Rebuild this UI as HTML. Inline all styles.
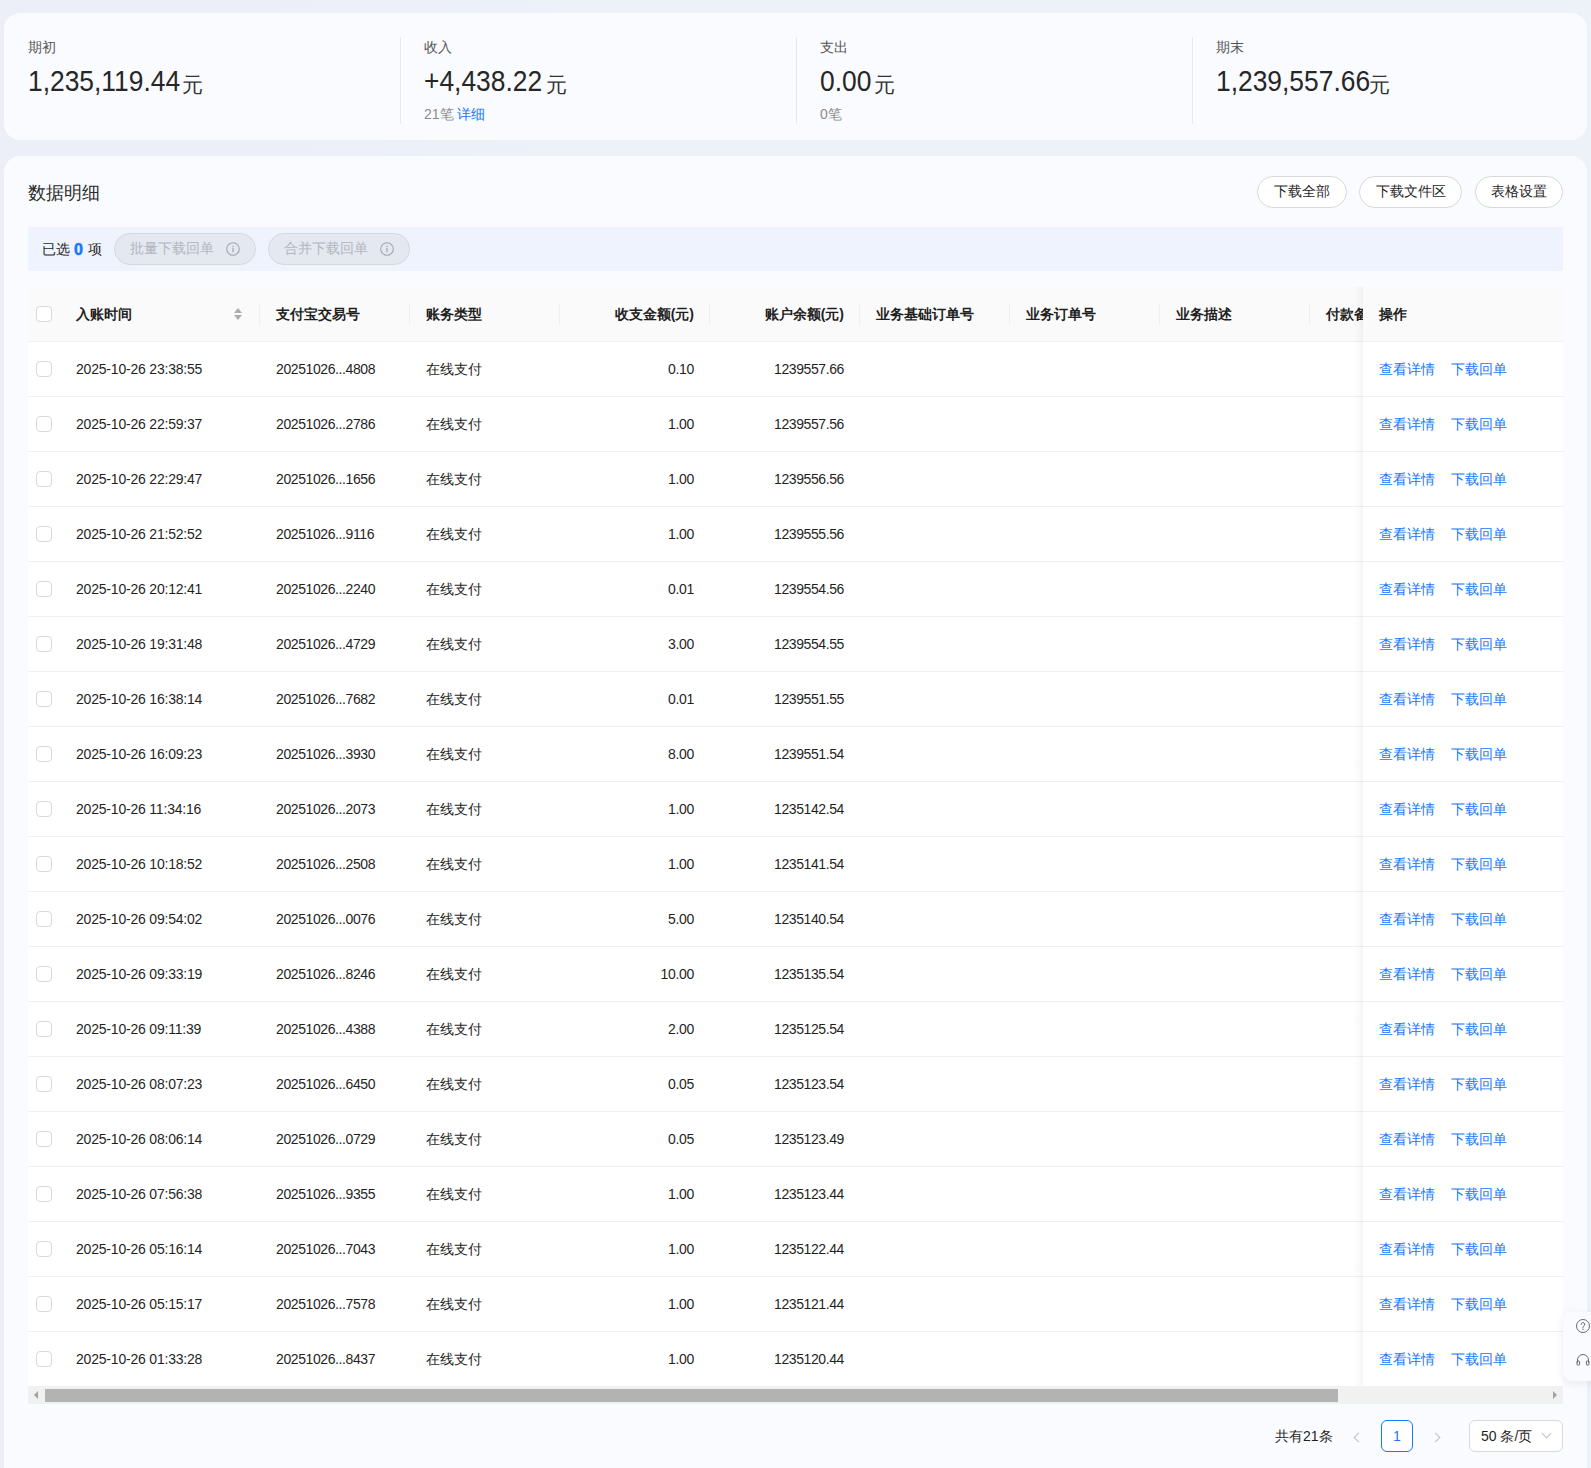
<!DOCTYPE html>
<html><head><meta charset="utf-8"><title>数据明细</title>
<style>
*{margin:0;padding:0;box-sizing:border-box}
html,body{width:1591px;height:1468px;overflow:hidden}
body{font-family:"Liberation Sans",sans-serif;font-size:14px;color:#1f1f1f;background:#edf1f8;position:relative}
.bg{position:absolute;left:0;top:0;width:1591px;height:1468px;background:linear-gradient(90deg,#eceef8 0%,#edf1f8 40%,#edf2f8 100%)}
.card1{position:absolute;left:4px;top:13px;width:1583px;height:127px;background:#fafbfe;border-radius:16px}
.sec{position:absolute;top:0;height:127px;width:396px}
.s0{left:0}.s1{left:396px}.s2{left:792px}.s3{left:1188px}
.dv{position:absolute;left:0;top:24px;width:1px;height:87px;background:#e6e8ee}
.lab{position:absolute;left:24px;top:25px;font-size:14px;line-height:18px;color:#555}
.num{position:absolute;left:24px;top:46px;height:44px;white-space:nowrap;color:#262626}
.nv{display:inline-block;font-size:29px;line-height:44px;transform:scaleX(.91);transform-origin:0 50%;vertical-align:top}
.yuan{position:absolute;top:58px;font-size:21px;line-height:28px;color:#333}
.s0 .yuan{left:178px}.s1 .yuan{left:146px}.s2 .yuan{left:78px}.s3 .yuan{left:177px}
.sub{position:absolute;left:24px;top:93px;font-size:14px;line-height:16px;white-space:nowrap}
.sub .g{color:#8c8c8c}
.lk{color:#1677ff}
.card2{position:absolute;left:4px;top:156px;width:1583px;height:1340px;background:#fafbfe;border-radius:16px}
.title{position:absolute;left:24px;top:24px;font-size:18px;line-height:26px;color:#2b2b2b}
.btn{position:absolute;top:20px;height:32px;line-height:29px;border:1px solid #d9d9d9;border-radius:16px;background:#fff;font-size:14px;color:#1f1f1f;text-align:center}
.b1{left:1253px;width:90px}.b2{left:1355px;width:103px}.b3{left:1471px;width:88px}
.selbar{position:absolute;left:24px;top:71px;width:1535px;height:44px;background:#eef3fd}
.seltxt{position:absolute;left:14px;top:0;line-height:44px;font-size:14px;color:#1f1f1f;white-space:nowrap}
.seltxt b{color:#1677ff;font-size:16px;position:relative;top:1px;-webkit-text-stroke:.5px #1677ff;margin-right:1px}
.pill{position:absolute;top:6px;height:32px;width:142px;border:1px solid #d6d8dc;border-radius:16px;background:#e4e9f1;color:#b3b6bd;font-size:14px;line-height:29px;padding-left:15px;white-space:nowrap}
.p1{left:86px}.p2{left:240px}
.info{position:absolute;left:111px;top:8px;width:14px;height:14px}
.tbl{position:absolute;left:24px;top:131px;width:1535px;height:1099px;background:#fff;border-radius:8px 8px 0 0;overflow:hidden}
.thead{position:absolute;left:0;top:0;width:1535px;height:55px;background:#fafafa;border-bottom:1px solid #f0f0f0}
.cb{position:absolute;left:8px;top:19px;width:16px;height:16px;border:1px solid #d9d9d9;border-radius:4px;background:#fff}
.th{position:absolute;top:0;line-height:54px;font-size:14px;font-weight:bold;color:#1f1f1f;white-space:nowrap}
.th.r{left:auto}
.vdiv{position:absolute;top:16px;width:1px;height:22px;background:#f0f0f0}
.sorter{position:absolute;left:206px;top:20px;width:8px;height:14px}
.sorter i{position:absolute;left:0;width:0;height:0;border-left:4px solid transparent;border-right:4px solid transparent}
.sorter .up{top:1px;border-bottom:5px solid #acacac}
.sorter .dn{top:8px;border-top:5px solid #acacac}
.fixh{position:absolute;left:1335px;top:0;width:200px;height:54px;background:#fafafa;line-height:54px;padding-left:16px;font-size:14px;font-weight:bold}
.tr{position:absolute;left:0;width:1535px;height:55px;border-bottom:1px solid #f0f0f0;background:#fff}
.td{position:absolute;top:0;line-height:54px;font-size:14px;color:#1f1f1f;white-space:nowrap}
.td.r{left:auto}
.fix{position:absolute;left:1335px;top:0;width:200px;height:54px;background:#fff;line-height:54px;padding-left:16px;font-size:14px;white-space:nowrap}
.fix .l2{margin-left:16px}
.sbar{position:absolute;left:24px;top:1230px;width:1535px;height:18px;background:#f1f1f1}
.thumb{position:absolute;left:17px;top:3px;width:1293px;height:13px;background:#b3b3b3}
.al{position:absolute;left:6px;top:5px;width:0;height:0;border-top:4px solid transparent;border-bottom:4px solid transparent;border-right:4px solid #a3a3a3}
.ar{position:absolute;right:6px;top:5px;width:0;height:0;border-top:4px solid transparent;border-bottom:4px solid transparent;border-left:4px solid #a3a3a3}
.pg{position:absolute;left:0;top:1264px;width:1583px;height:32px}
.total{position:absolute;left:1271px;top:0;line-height:32px;font-size:14px;color:#1f1f1f;white-space:nowrap}
.prev,.next{position:absolute;top:14px;width:7px;height:7px;border-left:1px solid #bfbfbf;border-bottom:1px solid #bfbfbf}
.prev{left:1351px;transform:rotate(45deg)}
.next{left:1428px;transform:rotate(-135deg)}
.page{position:absolute;left:1377px;top:0;width:32px;height:32px;border:1px solid #1677ff;border-radius:6px;text-align:center;line-height:30px;color:#1677ff;font-size:14px;background:#fff}
.size{position:absolute;left:1465px;top:0;width:94px;height:32px;border:1px solid #d9d9d9;border-radius:6px;background:#fff;line-height:30px;padding-left:11px;font-size:14px;white-space:nowrap;color:#1f1f1f}
.chev{position:absolute;left:73px;top:9px;width:7px;height:7px;border-left:1px solid #bfbfbf;border-bottom:1px solid #bfbfbf;transform:rotate(-45deg)}
.float{position:absolute;left:1563px;top:1312px;width:44px;height:69px;background:#fafbfe;border-radius:8px;box-shadow:0 2px 10px rgba(0,0,0,.08)}
.float .q{position:absolute;left:12px;top:6px}
.float .hs{position:absolute;left:12px;top:40px}
.c1{letter-spacing:-.2px}.c4{letter-spacing:-.3px}.c2{letter-spacing:-.4px}.c5{letter-spacing:-.4px}
.fshadow{position:absolute;left:1326px;top:0;width:9px;height:1099px;background:linear-gradient(90deg,rgba(0,0,0,0),rgba(0,0,0,.04));z-index:5}

</style></head><body>
<div class="bg"></div>
<div class="card1"><div class="sec s0"><div class="lab">期初</div><div class="num"><span class="nv">1,235,119.44</span></div><div class="yuan">元</div></div><div class="sec s1"><div class="dv"></div><div class="lab">收入</div><div class="num"><span class="nv">+4,438.22</span></div><div class="yuan">元</div><div class="sub"><span class="g">21笔</span> <span class="lk">详细</span></div></div><div class="sec s2"><div class="dv"></div><div class="lab">支出</div><div class="num"><span class="nv">0.00</span></div><div class="yuan">元</div><div class="sub"><span class="g">0笔</span></div></div><div class="sec s3"><div class="dv"></div><div class="lab">期末</div><div class="num"><span class="nv">1,239,557.66</span></div><div class="yuan">元</div></div></div>
<div class="card2">
  <div class="title">数据明细</div>
  <div class="btn b1">下载全部</div>
  <div class="btn b2">下载文件区</div>
  <div class="btn b3">表格设置</div>
  <div class="selbar">
    <span class="seltxt">已选 <b>0</b> 项</span>
    <div class="pill p1">批量下载回单<svg class="info" width="14" height="14" viewBox="0 0 14 14"><circle cx="7" cy="7" r="6.3" fill="none" stroke="#a3a6ad" stroke-width="1.1"/><rect x="6.4" y="5.8" width="1.2" height="4.4" fill="#a3a6ad"/><circle cx="7" cy="4.2" r=".75" fill="#a3a6ad"/></svg></div>
    <div class="pill p2">合并下载回单<svg class="info" width="14" height="14" viewBox="0 0 14 14"><circle cx="7" cy="7" r="6.3" fill="none" stroke="#a3a6ad" stroke-width="1.1"/><rect x="6.4" y="5.8" width="1.2" height="4.4" fill="#a3a6ad"/><circle cx="7" cy="4.2" r=".75" fill="#a3a6ad"/></svg></div>
  </div>
  <div class="tbl"><div class="thead"><div class="cb hcb"></div><div class="th" style="left:48px">入账时间</div><div class="th" style="left:248px">支付宝交易号</div><div class="th" style="left:398px">账务类型</div><div class="th r" style="right:869px">收支金额(元)</div><div class="th r" style="right:719px">账户余额(元)</div><div class="th" style="left:848px">业务基础订单号</div><div class="th" style="left:998px">业务订单号</div><div class="th" style="left:1148px">业务描述</div><div class="th" style="left:1298px">付款备注</div><div class="vdiv" style="left:231px"></div><div class="vdiv" style="left:381px"></div><div class="vdiv" style="left:531px"></div><div class="vdiv" style="left:681px"></div><div class="vdiv" style="left:831px"></div><div class="vdiv" style="left:981px"></div><div class="vdiv" style="left:1131px"></div><div class="vdiv" style="left:1281px"></div><div class="sorter"><i class="up"></i><i class="dn"></i></div><div class="fixh">操作</div></div><div class="tr" style="top:55px"><div class="cb"></div><div class="td c1" style="left:48px">2025-10-26 23:38:55</div><div class="td c2" style="left:248px">20251026...4808</div><div class="td" style="left:398px">在线支付</div><div class="td r c4" style="right:869px">0.10</div><div class="td r c5" style="right:719px">1239557.66</div><div class="fix"><span class="lk">查看详情</span><span class="lk l2">下载回单</span></div></div><div class="tr" style="top:110px"><div class="cb"></div><div class="td c1" style="left:48px">2025-10-26 22:59:37</div><div class="td c2" style="left:248px">20251026...2786</div><div class="td" style="left:398px">在线支付</div><div class="td r c4" style="right:869px">1.00</div><div class="td r c5" style="right:719px">1239557.56</div><div class="fix"><span class="lk">查看详情</span><span class="lk l2">下载回单</span></div></div><div class="tr" style="top:165px"><div class="cb"></div><div class="td c1" style="left:48px">2025-10-26 22:29:47</div><div class="td c2" style="left:248px">20251026...1656</div><div class="td" style="left:398px">在线支付</div><div class="td r c4" style="right:869px">1.00</div><div class="td r c5" style="right:719px">1239556.56</div><div class="fix"><span class="lk">查看详情</span><span class="lk l2">下载回单</span></div></div><div class="tr" style="top:220px"><div class="cb"></div><div class="td c1" style="left:48px">2025-10-26 21:52:52</div><div class="td c2" style="left:248px">20251026...9116</div><div class="td" style="left:398px">在线支付</div><div class="td r c4" style="right:869px">1.00</div><div class="td r c5" style="right:719px">1239555.56</div><div class="fix"><span class="lk">查看详情</span><span class="lk l2">下载回单</span></div></div><div class="tr" style="top:275px"><div class="cb"></div><div class="td c1" style="left:48px">2025-10-26 20:12:41</div><div class="td c2" style="left:248px">20251026...2240</div><div class="td" style="left:398px">在线支付</div><div class="td r c4" style="right:869px">0.01</div><div class="td r c5" style="right:719px">1239554.56</div><div class="fix"><span class="lk">查看详情</span><span class="lk l2">下载回单</span></div></div><div class="tr" style="top:330px"><div class="cb"></div><div class="td c1" style="left:48px">2025-10-26 19:31:48</div><div class="td c2" style="left:248px">20251026...4729</div><div class="td" style="left:398px">在线支付</div><div class="td r c4" style="right:869px">3.00</div><div class="td r c5" style="right:719px">1239554.55</div><div class="fix"><span class="lk">查看详情</span><span class="lk l2">下载回单</span></div></div><div class="tr" style="top:385px"><div class="cb"></div><div class="td c1" style="left:48px">2025-10-26 16:38:14</div><div class="td c2" style="left:248px">20251026...7682</div><div class="td" style="left:398px">在线支付</div><div class="td r c4" style="right:869px">0.01</div><div class="td r c5" style="right:719px">1239551.55</div><div class="fix"><span class="lk">查看详情</span><span class="lk l2">下载回单</span></div></div><div class="tr" style="top:440px"><div class="cb"></div><div class="td c1" style="left:48px">2025-10-26 16:09:23</div><div class="td c2" style="left:248px">20251026...3930</div><div class="td" style="left:398px">在线支付</div><div class="td r c4" style="right:869px">8.00</div><div class="td r c5" style="right:719px">1239551.54</div><div class="fix"><span class="lk">查看详情</span><span class="lk l2">下载回单</span></div></div><div class="tr" style="top:495px"><div class="cb"></div><div class="td c1" style="left:48px">2025-10-26 11:34:16</div><div class="td c2" style="left:248px">20251026...2073</div><div class="td" style="left:398px">在线支付</div><div class="td r c4" style="right:869px">1.00</div><div class="td r c5" style="right:719px">1235142.54</div><div class="fix"><span class="lk">查看详情</span><span class="lk l2">下载回单</span></div></div><div class="tr" style="top:550px"><div class="cb"></div><div class="td c1" style="left:48px">2025-10-26 10:18:52</div><div class="td c2" style="left:248px">20251026...2508</div><div class="td" style="left:398px">在线支付</div><div class="td r c4" style="right:869px">1.00</div><div class="td r c5" style="right:719px">1235141.54</div><div class="fix"><span class="lk">查看详情</span><span class="lk l2">下载回单</span></div></div><div class="tr" style="top:605px"><div class="cb"></div><div class="td c1" style="left:48px">2025-10-26 09:54:02</div><div class="td c2" style="left:248px">20251026...0076</div><div class="td" style="left:398px">在线支付</div><div class="td r c4" style="right:869px">5.00</div><div class="td r c5" style="right:719px">1235140.54</div><div class="fix"><span class="lk">查看详情</span><span class="lk l2">下载回单</span></div></div><div class="tr" style="top:660px"><div class="cb"></div><div class="td c1" style="left:48px">2025-10-26 09:33:19</div><div class="td c2" style="left:248px">20251026...8246</div><div class="td" style="left:398px">在线支付</div><div class="td r c4" style="right:869px">10.00</div><div class="td r c5" style="right:719px">1235135.54</div><div class="fix"><span class="lk">查看详情</span><span class="lk l2">下载回单</span></div></div><div class="tr" style="top:715px"><div class="cb"></div><div class="td c1" style="left:48px">2025-10-26 09:11:39</div><div class="td c2" style="left:248px">20251026...4388</div><div class="td" style="left:398px">在线支付</div><div class="td r c4" style="right:869px">2.00</div><div class="td r c5" style="right:719px">1235125.54</div><div class="fix"><span class="lk">查看详情</span><span class="lk l2">下载回单</span></div></div><div class="tr" style="top:770px"><div class="cb"></div><div class="td c1" style="left:48px">2025-10-26 08:07:23</div><div class="td c2" style="left:248px">20251026...6450</div><div class="td" style="left:398px">在线支付</div><div class="td r c4" style="right:869px">0.05</div><div class="td r c5" style="right:719px">1235123.54</div><div class="fix"><span class="lk">查看详情</span><span class="lk l2">下载回单</span></div></div><div class="tr" style="top:825px"><div class="cb"></div><div class="td c1" style="left:48px">2025-10-26 08:06:14</div><div class="td c2" style="left:248px">20251026...0729</div><div class="td" style="left:398px">在线支付</div><div class="td r c4" style="right:869px">0.05</div><div class="td r c5" style="right:719px">1235123.49</div><div class="fix"><span class="lk">查看详情</span><span class="lk l2">下载回单</span></div></div><div class="tr" style="top:880px"><div class="cb"></div><div class="td c1" style="left:48px">2025-10-26 07:56:38</div><div class="td c2" style="left:248px">20251026...9355</div><div class="td" style="left:398px">在线支付</div><div class="td r c4" style="right:869px">1.00</div><div class="td r c5" style="right:719px">1235123.44</div><div class="fix"><span class="lk">查看详情</span><span class="lk l2">下载回单</span></div></div><div class="tr" style="top:935px"><div class="cb"></div><div class="td c1" style="left:48px">2025-10-26 05:16:14</div><div class="td c2" style="left:248px">20251026...7043</div><div class="td" style="left:398px">在线支付</div><div class="td r c4" style="right:869px">1.00</div><div class="td r c5" style="right:719px">1235122.44</div><div class="fix"><span class="lk">查看详情</span><span class="lk l2">下载回单</span></div></div><div class="tr" style="top:990px"><div class="cb"></div><div class="td c1" style="left:48px">2025-10-26 05:15:17</div><div class="td c2" style="left:248px">20251026...7578</div><div class="td" style="left:398px">在线支付</div><div class="td r c4" style="right:869px">1.00</div><div class="td r c5" style="right:719px">1235121.44</div><div class="fix"><span class="lk">查看详情</span><span class="lk l2">下载回单</span></div></div><div class="tr" style="top:1045px"><div class="cb"></div><div class="td c1" style="left:48px">2025-10-26 01:33:28</div><div class="td c2" style="left:248px">20251026...8437</div><div class="td" style="left:398px">在线支付</div><div class="td r c4" style="right:869px">1.00</div><div class="td r c5" style="right:719px">1235120.44</div><div class="fix"><span class="lk">查看详情</span><span class="lk l2">下载回单</span></div></div><div class="fshadow"></div></div>
  <div class="sbar"><i class="al"></i><div class="thumb"></div><i class="ar"></i></div>
  <div class="pg">
    <span class="total">共有21条</span>
    <span class="prev"></span>
    <span class="page">1</span>
    <span class="next"></span>
    <span class="size">50 条/页<i class="chev"></i></span>
  </div>
</div>
<div class="float">
  <svg class="q" width="16" height="16" viewBox="0 0 16 16"><circle cx="8" cy="8" r="6.5" fill="none" stroke="#666a82" stroke-width="1"/><path d="M6.2 6.4a1.8 1.8 0 1 1 2.6 1.6c-.5.3-.8.6-.8 1.2v.4" fill="none" stroke="#666a82" stroke-width="1" stroke-linecap="round"/><circle cx="8" cy="11.3" r=".7" fill="#666a82"/></svg>
  <svg class="hs" width="16" height="16" viewBox="0 0 16 16"><path d="M2.5 11V8a5.5 5.5 0 0 1 11 0v3" fill="none" stroke="#666a82" stroke-width="1"/><rect x="2" y="9" width="2.6" height="4" rx=".6" fill="none" stroke="#666a82" stroke-width="1"/><rect x="11.4" y="9" width="2.6" height="4" rx=".6" fill="none" stroke="#666a82" stroke-width="1"/></svg>
</div>
</body></html>
